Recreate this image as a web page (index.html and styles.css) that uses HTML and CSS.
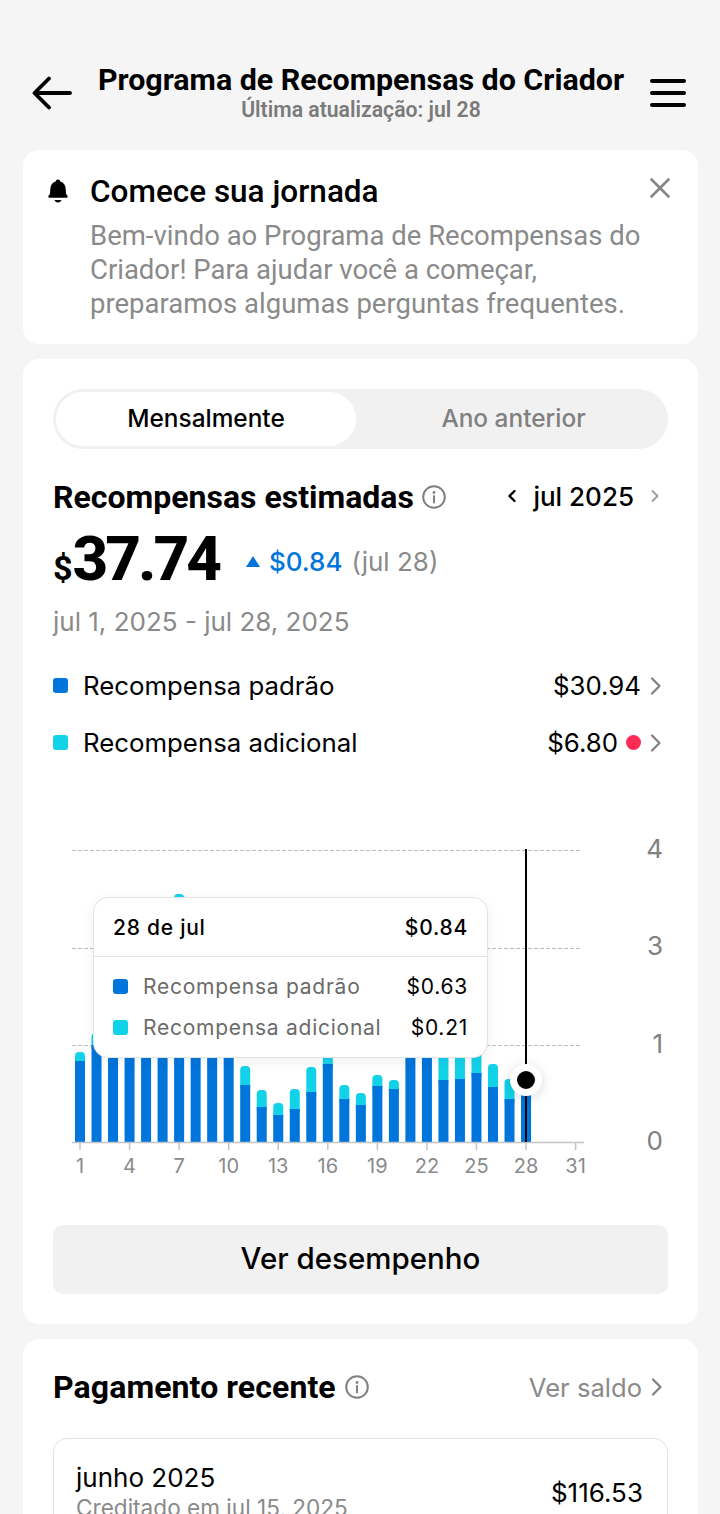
FILE: index.html
```html
<!DOCTYPE html>
<html lang="pt">
<head>
    <meta charset="UTF-8">
    <meta name="viewport" content="width=device-width, initial-scale=1.0">
    <title>Programa de Recompensas do Criador</title>
    <link rel="stylesheet" href="styles.css">
</head>
<body>
    <header class="topbar">
        <svg class="back" width="40" height="34" viewBox="0 0 40 34"><path d="M38 17H3M17 2.500 2.500 17 17 31.500" fill="none" stroke="#000" stroke-width="3.800" stroke-linecap="round" stroke-linejoin="round"/></svg>
        <div class="topbar-title">
            <h1>Programa de Recompensas do Criador</h1>
            <p>Última atualização: jul 28</p>
        </div>
        <div class="burger"><span></span><span></span><span></span></div>
    </header>

    <section class="card notice">
        <svg class="bell" width="24" height="26" viewBox="0 0 24 26"><path d="M12 1.500c1.300 0 2.200.9 2.300 2.100 3.500 1 5.200 3.800 5.400 7.400l.3 4.200c.1.900.5 1.500 1.300 2.300.9.900.4 2.300-.9 2.300H3.600c-1.300 0-1.800-1.400-.9-2.300.8-.8 1.200-1.400 1.300-2.300l.3-4.200c.2-3.600 1.900-6.400 5.400-7.400.1-1.200 1-2.100 2.300-2.100zM8.500 22h7c-.4 1.500-1.800 2.500-3.500 2.500S8.900 23.500 8.500 22z" fill="#000"/></svg>
        <div class="notice-body">
            <h2>Comece sua jornada</h2>
            <p>Bem-vindo ao Programa de Recompensas do Criador! Para ajudar você a começar, preparamos algumas perguntas frequentes.</p>
        </div>
        <svg class="close" width="22" height="22" viewBox="0 0 22 22"><path d="M2.500 2.500l17 17M19.500 2.500l-17 17" stroke="#858585" stroke-width="2.600" stroke-linecap="round"/></svg>
    </section>

    <section class="card rewards">
        <div class="tabs">
            <div class="tab active">Mensalmente</div>
            <div class="tab">Ano anterior</div>
        </div>

        <div class="title-row">
            <h3>Recompensas estimadas</h3>
            <svg class="info" width="26" height="26" viewBox="0 0 26 26"><circle cx="13" cy="13" r="10.800" fill="none" stroke="#808080" stroke-width="2"/><circle cx="13" cy="8.500" r="1.400" fill="#808080"/><path d="M13 12v6.500" stroke="#808080" stroke-width="2" stroke-linecap="round"/></svg>
            <div class="month">
                <svg width="12" height="16" viewBox="0 0 12 16"><path d="M8.500 3 3.500 8l5 5" fill="none" stroke="#000" stroke-width="2.400" stroke-linecap="round" stroke-linejoin="round"/></svg>
                <span>jul 2025</span>
                <svg width="12" height="16" viewBox="0 0 12 16"><path d="M3.500 3l5 5-5 5" fill="none" stroke="#a0a0a0" stroke-width="2" stroke-linecap="round" stroke-linejoin="round"/></svg>
            </div>
        </div>

        <div class="total-row">
            <div class="total"><small>$</small>37.74</div>
            <div class="delta"><i class="tri"></i>$0.84</div>
            <div class="delta-date">(jul 28)</div>
        </div>
        <div class="range">jul 1, 2025 - jul 28, 2025</div>

        <div class="legend-row">
            <i class="swatch blue"></i>
            <span class="legend-name">Recompensa padrão</span>
            <span class="legend-val">$30.94</span>
            <svg class="chev" width="14" height="20" viewBox="0 0 14 20"><path d="M3 2.500l7.500 7.500L3 17.500" fill="none" stroke="#808080" stroke-width="2.200" stroke-linecap="round" stroke-linejoin="round"/></svg>
        </div>
        <div class="legend-row">
            <i class="swatch cyan"></i>
            <span class="legend-name">Recompensa adicional</span>
            <span class="legend-val">$6.80</span>
            <i class="red-dot"></i>
            <svg class="chev" width="14" height="20" viewBox="0 0 14 20"><path d="M3 2.500l7.500 7.500L3 17.500" fill="none" stroke="#808080" stroke-width="2.200" stroke-linecap="round" stroke-linejoin="round"/></svg>
        </div>

        <div class="chart">
            <svg id="plot" width="615" height="360" viewBox="53 830 615 360"></svg>
            <div class="tooltip">
                <div class="tip-head"><span>28 de jul</span><span>$0.84</span></div>
                <div class="tip-body">
                    <div class="tip-row"><i class="swatch blue"></i><span class="tip-name">Recompensa padrão</span><span class="tip-val">$0.63</span></div>
                    <div class="tip-row"><i class="swatch cyan"></i><span class="tip-name">Recompensa adicional</span><span class="tip-val">$0.21</span></div>
                </div>
            </div>
            <div class="marker"></div>
        </div>

        <button class="perf" type="button">Ver desempenho</button>
    </section>

    <section class="card payout">
        <div class="title-row">
            <h3>Pagamento recente</h3>
            <svg class="info" width="26" height="26" viewBox="0 0 26 26"><circle cx="13" cy="13" r="10.800" fill="none" stroke="#808080" stroke-width="2"/><circle cx="13" cy="8.500" r="1.400" fill="#808080"/><path d="M13 12v6.500" stroke="#808080" stroke-width="2" stroke-linecap="round"/></svg>
            <div class="balance">
                <span>Ver saldo</span>
                <svg width="14" height="20" viewBox="0 0 14 20"><path d="M3 2.500l7.500 7.500L3 17.500" fill="none" stroke="#808080" stroke-width="2.200" stroke-linecap="round" stroke-linejoin="round"/></svg>
            </div>
        </div>
        <div class="pay-box">
            <div>
                <div class="pay-month">junho 2025</div>
                <div class="pay-date">Creditado em jul 15, 2025</div>
            </div>
            <div class="pay-val">$116.53</div>
        </div>
    </section>

    <script src="chart.js"></script>
</body>
</html>
```

FILE: styles.css
```css
html, body {
    margin: 0;
    height: 1514px;
    overflow: hidden;
}
body {
    font-family: 'Inter', 'Noto Sans', sans-serif;
    background-color: #f5f5f5;
    color: #000;
}
h1, h2, h3, p {
    margin: 0;
}
i {
    display: block;
}

.topbar {
    display: flex;
    align-items: flex-start;
    height: 150px;
    box-sizing: border-box;
    padding: 64px 34px 0 32px;
}
.back {
    margin-top: 12px;
    flex: none;
}
.topbar-title {
    flex: 1;
    text-align: center;
}
.topbar-title h1 {
    font-family: 'Roboto', sans-serif;
    font-size: 30.400px;
    line-height: 32px;
    font-weight: 700;
    white-space: nowrap;
}
.topbar-title p {
    font-family: 'Roboto', sans-serif;
    margin-top: 2px;
    font-size: 21.200px;
    line-height: 24px;
    font-weight: 600;
    color: #7a7a7a;
}
.burger {
    flex: none;
    margin-top: 15px;
    width: 36px;
    display: flex;
    flex-direction: column;
    gap: 8px;
}
.burger span {
    height: 4px;
    border-radius: 2px;
    background: #000;
}

.card {
    background: #fff;
    border-radius: 16px;
    margin: 0 22px 15px 23px;
}

.notice {
    display: flex;
    height: 194px;
    box-sizing: border-box;
    padding: 26px 27px 0 23px;
}
.bell {
    flex: none;
    margin: 2px 20px 0 0;
}
.notice-body {
    flex: 1;
}
.notice-body h2 {
    font-family: 'Roboto', sans-serif;
    font-size: 31.500px;
    line-height: 32px;
    font-weight: 500;
}
.notice-body p {
    font-family: 'Roboto', sans-serif;
    margin-top: 11px;
    font-size: 27.500px;
    line-height: 34px;
    color: #8a8a8a;
    max-width: 552px;
}
.close {
    flex: none;
    margin-top: 1px;
    margin-left: -20px;
}

.rewards {
    height: 965px;
    box-sizing: border-box;
    padding: 30px 30px 0;
}
.tabs {
    display: flex;
    height: 60px;
    box-sizing: border-box;
    padding: 3px;
    background: #f1f1f2;
    border-radius: 30px;
}
.tab {
    width: 300px;
    box-sizing: border-box;
    padding-bottom: 2px;
    display: flex;
    align-items: center;
    justify-content: center;
    font-size: 24.400px;
    font-weight: 500;
    color: #808080;
}
.tab + .tab {
    width: 309px;
    padding-left: 6px;
}
.tab.active {
    background: #fff;
    color: #000;
    border-radius: 27px;
}

.title-row {
    display: flex;
    align-items: center;
}
.rewards .title-row {
    margin-top: 30px;
    height: 36px;
}
.title-row h3 {
    font-family: 'Roboto', sans-serif;
    font-size: 32px;
    line-height: 36px;
    font-weight: 700;
}
.info {
    margin-left: 7px;
    flex: none;
}
.month {
    margin-left: auto;
    display: flex;
    align-items: center;
    gap: 15px;
    padding: 0 7px 2px 0;
    font-size: 26px;
    font-weight: 500;
}

.total-row {
    display: flex;
    align-items: center;
    margin-top: 15px;
    height: 66px;
}
.total {
    font-family: 'Roboto', sans-serif;
    font-size: 62px;
    line-height: 66px;
    font-weight: 800;
    letter-spacing: -3px;
}
.total small {
    font-size: 34px;
    font-weight: 700;
    letter-spacing: 0;
}
.delta {
    display: flex;
    align-items: center;
    margin: 0 0 4px 27px;
    font-size: 26px;
    font-weight: 500;
    color: #0075db;
}
.tri {
    width: 0;
    height: 0;
    margin-right: 9px;
    border-left: 7px solid transparent;
    border-right: 7px solid transparent;
    border-bottom: 11px solid #0075db;
}
.delta-date {
    margin: 0 0 4px 9px;
    font-size: 26px;
    color: #8a8a8a;
}
.range {
    margin-top: 9px;
    font-size: 26px;
    line-height: 34px;
    color: #8a8a8a;
}

.legend-row {
    display: flex;
    align-items: center;
    height: 57px;
    padding-right: 5px;
    font-size: 25.800px;
}
.range + .legend-row {
    margin-top: 18px;
}
.swatch {
    flex: none;
    width: 15px;
    height: 15px;
    border-radius: 3px;
}
.swatch.blue {
    background: #0075db;
}
.swatch.cyan {
    background: #12d2e8;
}
.legend-name {
    margin-left: 15px;
}
.legend-val {
    margin-left: auto;
}
.red-dot {
    width: 15px;
    height: 15px;
    margin-left: 8px;
    border-radius: 50%;
    background: #fe2c55;
}
.chev {
    flex: none;
    margin-left: 8px;
}

.chart {
    position: relative;
    height: 360px;
    margin-top: 59px;
}
.chart svg {
    display: block;
}
.tooltip {
    position: absolute;
    left: 40px;
    top: 67px;
    width: 395px;
    height: 161px;
    box-sizing: border-box;
    background: #fff;
    border: 1px solid #e3e3e3;
    border-radius: 15px;
    box-shadow: 0 4px 14px rgba(0, 0, 0, 0.06);
    font-size: 21px;
    letter-spacing: 0.750px;
}
.tip-head {
    display: flex;
    justify-content: space-between;
    align-items: center;
    height: 58px;
    padding: 0 19px;
    border-bottom: 1px solid #e3e3e3;
    font-weight: 500;
}
.tip-body {
    padding: 9px 19px 0;
}
.tip-row {
    display: flex;
    align-items: center;
    height: 41px;
}
.tip-name {
    margin-left: 15px;
    color: #6b6b6b;
}
.tip-val {
    margin-left: auto;
}
.marker {
    position: absolute;
    left: 457px;
    top: 234px;
    width: 32px;
    height: 32px;
    box-sizing: border-box;
    border: 7px solid #fff;
    border-radius: 50%;
    background: #000;
    box-shadow: 0 2px 12px rgba(0, 0, 0, 0.15);
}

.perf {
    display: block;
    width: 100%;
    height: 69px;
    margin-top: 35px;
    padding: 0 0 4px;
    border: none;
    border-radius: 10px;
    background: #f1f1f2;
    font-family: 'Inter', sans-serif;
    font-size: 29.500px;
    font-weight: 500;
    color: #000;
}

.payout {
    padding: 30px 30px 0;
    height: 300px;
    box-sizing: border-box;
}
.payout .title-row {
    height: 36px;
}
.payout h3 {
    letter-spacing: 0.100px;
}
.payout .info {
    margin-left: 8px;
}
.balance {
    margin-left: auto;
    display: flex;
    align-items: center;
    gap: 8px;
    padding-right: 4px;
    font-size: 25.600px;
    color: #8a8a8a;
}
.pay-box {
    display: flex;
    align-items: center;
    justify-content: space-between;
    margin-top: 33px;
    height: 106px;
    padding: 0 24px 4px 22px;
    border: 1px solid #e3e3e3;
    border-radius: 14px;
}
.pay-month {
    font-size: 26px;
    line-height: 32px;
}
.pay-date {
    font-size: 22.600px;
    line-height: 28px;
    color: #8a8a8a;
}
.pay-val {
    font-size: 26px;
}
```

FILE: chart.js
```js
// [blue top y, cyan top y] for each day, read off the baseline at y=1142
const days = [
    [1061, 1052], [1045, 1033], [1050, 1040], [1050, 1040], [1050, 1040], [1050, 1040], [905, 894],
    [1050, 1040], [1050, 1040], [1050, 1040], [1085, 1066], [1107, 1090], [1115, 1103], [1109, 1089],
    [1092, 1067], [1064, 1050], [1099, 1085], [1105, 1093], [1086, 1075], [1089, 1080], [1050, 1040],
    [1050, 1040], [1080, 1050], [1079, 1050], [1073, 1050], [1087, 1064], [1099, 1079], [1095, 1082]
];
const BASE = 1142;
const NS = "http://www.w3.org/2000/svg";
const plot = document.getElementById("plot");

function add(tag, attrs, text) {
    const el = document.createElementNS(NS, tag);
    for (const k in attrs) el.setAttribute(k, attrs[k]);
    if (text) el.textContent = text;
    plot.appendChild(el);
}

const xOf = (day) => 80 + (day - 1) * 16.52;

[850.5, 948.500, 1045.500].forEach((y) => {
    add("line", { x1: 72, x2: 582, y1: y, y2: y, stroke: "#bdbdbd", "stroke-width": 1, "stroke-dasharray": "4 2" });
});

function topBar(x, y, h, fill) {
    const r = 4;
    add("path", { d: `M${x - 5} ${y + h}V${y + r}q0-${r} ${r}-${r}h2q${r} 0 ${r} ${r}V${y + h}z`, fill });
}

days.forEach(([blue, cyan], i) => {
    const x = xOf(i + 1);
    topBar(x, cyan, blue - cyan + 4, "#12d2e8");
    add("rect", { x: x - 5, y: blue, width: 10, height: BASE - blue, fill: "#0075db" });
});

add("line", { x1: 72, x2: 584, y1: 1142.500, y2: 1142.500, stroke: "#c4c4c4", "stroke-width": 1.500 });
for (let d = 1; d <= 31; d += 3) {
    add("line", { x1: xOf(d), x2: xOf(d), y1: 1143, y2: 1150, stroke: "#c4c4c4", "stroke-width": 1.500 });
    add("text", { x: xOf(d), y: 1173, "text-anchor": "middle", "font-size": 20, fill: "#8a8a8a", "font-family": "Inter, sans-serif" }, String(d));
}
[["4", 858], ["3", 955], ["1", 1053], ["0", 1150]].forEach(([t, y]) => {
    add("text", { x: 663, y, "text-anchor": "end", "font-size": 26, fill: "#808080", "font-family": "Inter, sans-serif" }, t);
});

add("line", { x1: 526, x2: 526, y1: 849, y2: 1142, stroke: "#000", "stroke-width": 2 });
```
